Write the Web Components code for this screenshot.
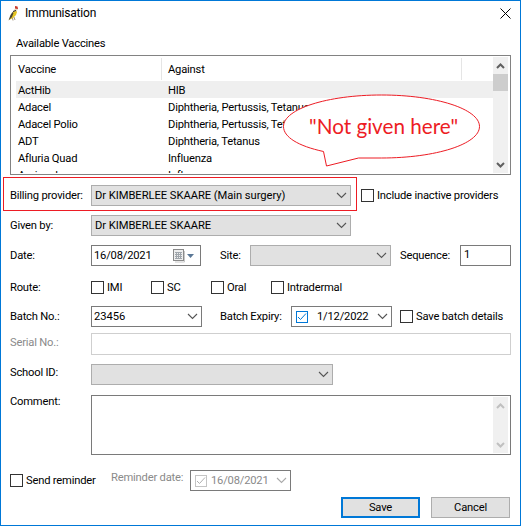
<!DOCTYPE html>
<html><head><meta charset="utf-8"><title>Immunisation</title>
<style>html,body{margin:0;padding:0;background:#fff}body{font:11.2px Roboto,"Liberation Sans",sans-serif;letter-spacing:-.2px;color:#000}</style>
</head><body>
<x-window>
  <x-titlebar slot="title">Immunisation</x-titlebar>
  <x-form-label style="margin:9px 0 0 15px;height:18px;display:flex;">Available Vaccines</x-form-label>
  <x-listview style="margin-top:3px"></x-listview>

  <x-row style="margin-top:10px"><x-form-label w="81">Billing provider:</x-form-label><x-combo w="260" disabled-look>Dr KIMBERLEE SKAARE (Main surgery)</x-combo><x-check style="margin-left:10px">Include inactive providers</x-check></x-row>
  <x-row style="margin-top:9px"><x-form-label w="81">Given by:</x-form-label><x-combo w="260" disabled-look>Dr KIMBERLEE SKAARE</x-combo></x-row>
  <x-row style="margin-top:9px"><x-form-label w="81">Date:</x-form-label><x-date-box w="110">16/08/2021</x-date-box><x-form-label w="30" style="margin-left:19px">Site:</x-form-label><x-combo w="141" disabled-look></x-combo><x-form-label w="60" style="margin-left:9px">Sequence:</x-form-label><x-text-box w="51">1</x-text-box></x-row>
  <x-row style="margin-top:11px"><x-form-label w="81">Route:</x-form-label><x-check w="60">IMI</x-check><x-check w="60">SC</x-check><x-check w="60">Oral</x-check><x-check w="80">Intradermal</x-check></x-row>
  <x-row style="margin-top:8px"><x-form-label w="81">Batch No.:</x-form-label><x-combo w="111" pad="3">23456</x-combo><x-form-label w="71" style="margin-left:18px">Batch Expiry:</x-form-label><x-date-pick w="101" checked>1/12/2022</x-date-pick><x-check style="margin-left:8px">Save batch details</x-check></x-row>
  <x-row style="margin-top:6px;height:22px"><x-form-label w="81" muted lift>Serial No.:</x-form-label><x-text-box w="420" muted></x-text-box></x-row>
  <x-row style="margin-top:9px"><x-form-label w="81" lift>School ID:</x-form-label><x-combo w="242" disabled-look></x-combo></x-row>
  <x-row style="margin-top:10px;height:60px;align-items:flex-start"><x-form-label w="81" top>Comment:</x-form-label><x-memo w="420"></x-memo></x-row>
  <x-row style="margin-top:15px"><x-check w="101">Send reminder</x-check><x-form-label w="79" muted lift style="margin-bottom:3px">Reminder date:</x-form-label><x-date-pick w="101" muted checked>16/08/2021</x-date-pick></x-row>
  <x-row style="margin-top:6px;justify-content:flex-end;padding-right:10px"><x-button primary>Save</x-button><x-button style="margin-left:11px">Cancel</x-button></x-row>

  <x-red-frame></x-red-frame>
  <x-callout>"Not given here"</x-callout>
</x-window>
<script>
function el(name, css, html, init){
  customElements.define(name, class extends HTMLElement{
    constructor(){super();const r=this.attachShadow({mode:'open'});r.innerHTML='<style>'+css+'</style>'+html;}
    connectedCallback(){
      const w=this.getAttribute('w'); if(w) this.style.width=w+'px';
      if(init) init(this,this.shadowRoot);
    }
  });
}
const chev=(c,sw)=>`<svg width="11" height="7" viewBox="0 0 11 7"><path d="M1 1l4.500 4.500L10 1" fill="none" stroke="${c}" stroke-width="${sw}"/></svg>`;

el('x-window',`:host{display:flex;flex-direction:column;position:relative;box-sizing:border-box;width:521px;height:526px;border:1px solid #0078d7;background:#fff;overflow:hidden}`,`<slot name="title"></slot><slot></slot>`);

el('x-titlebar',`:host{display:flex;align-items:center;height:24px;flex:none;font-size:12px}
 svg.b{margin:0 6px 0 6px;flex:none}
 .t{flex:1}
 svg.x{margin-right:9px;flex:none}`,
 `<svg class="b" width="12" height="16" viewBox="0 0 12 16">
   <path d="M2 15L4 10l2-3 3-2 1 2-1 3-3 3z" fill="#e6c522"/>
   <path d="M1.500 15.500L3.500 10 5.500 7l1 1-1.500 4z" fill="#4a4436"/>
   <path d="M8 1l2.500.5.500 2.500-3 1z" fill="#c9392b"/>
   <path d="M6.500 5.500L8 3.500l2.500.5-.500 2-2.500 .5z" fill="#e8dcc4"/>
   <path d="M6 6.500l3-1" stroke="#222" stroke-width="1"/>
   <path d="M5.500 13l.5 2.500M7 12l1 3" stroke="#8a7a60" stroke-width=".8" fill="none"/>
  </svg><span class="t"><slot></slot></span>
  <svg class="x" width="11" height="11" viewBox="0 0 11 11"><path d="M.5.5l10 10M10.500.5l-10 10" stroke="#000" stroke-width="1"/></svg>`);

el('x-form-label',`:host{display:flex;align-items:center;flex:none;white-space:nowrap;height:100%;box-sizing:border-box}
 :host([muted]){color:#8a8a8a}
 :host([lift]){padding-bottom:4px}
 :host([top]){align-items:flex-start;line-height:14px}`,`<slot></slot>`);

el('x-row',`:host{display:flex;align-items:center;height:21px;padding-left:9px;flex:none}`,`<slot></slot>`);

el('x-scrollbar',`:host{display:flex;flex-direction:column;align-items:center;width:15px;height:100%;background:#f0f0f0;flex:none;margin-right:2px}
 .a{height:17px;display:flex;align-items:center;justify-content:center;flex:none}
 .m{flex:1;width:100%}
 .th{height:17px;background:#cdcdcd;width:100%;display:none}
 :host([thumb]) .th{display:block}
 svg{display:block}`,
 `<div class="a u"></div><div class="th"></div><div class="m"></div><div class="a d"></div>`,
 (h,r)=>{const c=h.hasAttribute('muted')?'#c0c0c0':'#606060';
  r.querySelector('.u').innerHTML=`<svg width="9" height="6" viewBox="0 0 9 6"><path d="M1 5l3.500-3.500L8 5" fill="none" stroke="${c}" stroke-width="2"/></svg>`;
  r.querySelector('.d').innerHTML=`<svg width="9" height="6" viewBox="0 0 9 6"><path d="M1 1l3.500 3.500L8 1" fill="none" stroke="${c}" stroke-width="2"/></svg>`;});

el('x-list-row',`:host{display:grid;grid-template-columns:146px 300px;height:17px;line-height:19px;white-space:nowrap;flex:none}
 :host([sel]){background:#efefef}
 .a{padding-left:2px;overflow:hidden}.b{padding-left:6px;overflow:hidden}`,
 `<div class="a"></div><div class="b"></div>`,
 (h,r)=>{r.querySelector('.a').textContent=h.getAttribute('a');r.querySelector('.b').textContent=h.getAttribute('b');});

el('x-listview',`:host{display:flex;box-sizing:border-box;width:501px;height:120px;margin-left:9px;border:1px solid #828282;flex:none;overflow:hidden;padding:1px 0}
 .c{flex:1;padding-left:5px;overflow:hidden;min-width:0;margin-top:-1px}
 .h{display:grid;grid-template-columns:146px 300px;height:25px;align-items:center}
 .h div{height:22px;margin-top:1px;display:flex;align-items:center;border-right:1px solid #e5e5e5}
 .h div:first-child{padding-left:2px}.h div:last-child{padding-left:6px}
 .rows{display:flex;flex-direction:column}`,
 `<div class="c"><div class="h"><div>Vaccine</div><div>Against</div></div><div class="rows">
 <x-list-row sel a="ActHib" b="HIB"></x-list-row>
 <x-list-row a="Adacel" b="Diphtheria, Pertussis, Tetanus"></x-list-row>
 <x-list-row a="Adacel Polio" b="Diphtheria, Pertussis, Tetanus, Polio"></x-list-row>
 <x-list-row a="ADT" b="Diphtheria, Tetanus"></x-list-row>
 <x-list-row a="Afluria Quad" b="Influenza"></x-list-row>
 <x-list-row a="Agrippal" b="Influenza"></x-list-row>
 </div></div><x-scrollbar thumb></x-scrollbar>`);

el('x-combo',`:host{display:flex;align-items:center;box-sizing:border-box;height:21px;border:1px solid #7a7a7a;background:#fff;flex:none;white-space:nowrap;letter-spacing:-.05px}
 :host([disabled-look]){background:#e1e1e1;border-color:#adadad}
 .t{flex:1;padding-left:2px;overflow:hidden}
 :host([disabled-look]) .t{padding-left:3px}
 svg{margin-right:3px;flex:none}`,
 `<span class="t"><slot></slot></span>`+chev('#555','1.1'));

el('x-text-box',`:host{display:block;box-sizing:border-box;height:21px;border:1px solid #7a7a7a;background:#fff;flex:none;padding:0 3px;line-height:17px}
 :host([muted]){border-color:#cfcfcf;height:22px}`,`<slot></slot>`);

el('x-memo',`:host{display:flex;justify-content:flex-end;box-sizing:border-box;height:60px;border:1px solid #7a7a7a;background:#fff;flex:none;padding:1px 0}`,`<x-scrollbar muted></x-scrollbar>`);

el('x-date-box',`:host{display:flex;align-items:center;box-sizing:border-box;height:21px;border:1px solid #7a7a7a;flex:none;padding-left:2px}
 span{flex:1}svg{flex:none;margin-right:6px}`,
 `<span><slot></slot></span><svg width="21" height="14" viewBox="0 0 21 14">
  <rect x=".5" y=".5" width="10" height="11" fill="#eee" stroke="#8a8a8a"/>
  <path d="M2 3.500h7M2 5.500h7M2 7.500h7M2 9.500h7M3.500 3v7M5.500 3v7M7.500 3v7" stroke="#a0a6ac" stroke-width="1"/>
  <path d="M11.500 2v11H2" fill="none" stroke="#c8c8c8"/>
  <path d="M14 5h7l-3.500 4z" fill="#5a7796"/></svg>`);

el('x-date-pick',`:host{display:flex;align-items:center;box-sizing:border-box;height:21px;border:1px solid #7a7a7a;flex:none;padding-left:4px;white-space:nowrap}
 .b{width:12px;height:12px;box-sizing:border-box;border:1px solid #0078d7;flex:none;margin-top:1px;display:flex}
 .t{flex:1;padding-left:9px}
 svg.c{margin-right:3px;flex:none}
 :host([muted]){color:#8a8a8a}
 :host([muted]) .b{border-color:#c4c4c4}
 :host([muted]) .t{padding-left:4px}`,
 `<span class="b"></span><span class="t"><slot></slot></span>`,
 (h,r)=>{const m=h.hasAttribute('muted');
  r.querySelector('.b').innerHTML=`<svg width="10" height="10" viewBox="0 0 10 10"><path d="M1 5l2.500 2.500L9 1.500" fill="none" stroke="${m?'#b0b0b0':'#0078d7'}" stroke-width="1"/></svg>`;
  r.querySelector('.t').insertAdjacentHTML('afterend',chev(m?'#aaa':'#555','1.1').replace('<svg','<svg class="c"'));});

el('x-check',`:host{display:flex;align-items:center;flex:none;white-space:nowrap}
 .b{width:13px;height:13px;box-sizing:border-box;border:1px solid #333;background:#fff;margin-right:3px;flex:none}`,
 `<span class="b"></span><slot></slot>`);

el('x-button',`:host{display:flex;align-items:center;justify-content:center;box-sizing:border-box;width:79px;height:21px;background:#e1e1e1;border:1px solid #adadad;flex:none}
 :host([primary]){border:2px solid #0078d7}`,`<slot></slot>`);

el('x-red-frame',`:host{position:absolute;left:2px;top:176px;width:354px;height:34px;box-sizing:border-box;border:1px solid #ed1c24;pointer-events:none}`,``);

el('x-callout',`:host{position:absolute;left:280px;top:92px;width:205px;height:78px;color:#ed1c24}
 svg{position:absolute;left:0;top:0}
 span{position:absolute;left:28px;top:19px;font:20.700px/28px Lato,"Open Sans",sans-serif;letter-spacing:0;white-space:nowrap}`,
 `<svg width="205" height="78" viewBox="0 0 205 78"><path d="M42.500 58.500C17 53 2.500 44 2.500 33.500 2.500 16 46 2 100.500 2s98 14 98 31.500S155 65 100.500 65H77.500L45.500 73z" fill="#fff" stroke="#ed1c24" stroke-width="1"/></svg><span><slot></slot></span>`);
</script>
</body></html>
